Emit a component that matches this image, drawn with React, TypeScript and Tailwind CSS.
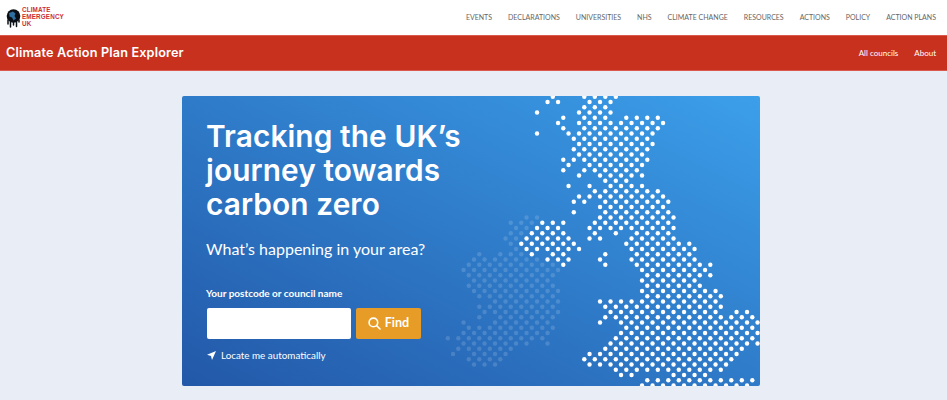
const uk: [number, number[][]][] = [
  [0, [[-6, -6], [0, 6]]], [1, [[-7, -7], [-5, -5], [1, 5]]], [2, [[0, 4]]], [3, [[-9, -9], [-1, 5]]],
  [4, [[-4, -4], [0, 4], [8, 14]]], [5, [[-5, -5], [-1, 5], [7, 15]]], [6, [[-4, -4], [0, 14]]],
  [7, [[-9, -9], [-3, -3], [-1, 13]]], [8, [[-2, -2], [0, 12]]], [9, [[-1, 13]]], [10, [[-2, -2], [0, 12]]],
  [11, [[-1, 11]]], [12, [[-4, -4], [-2, -2], [0, 12]]], [13, [[-3, -3], [1, 11]]], [14, [[-4, -4], [0, 10]]],
  [15, [[-1, -1], [3, 11]]], [16, [[4, 8]]], [17, [[-3, -3], [1, 1], [5, 11]]], [18, [[2, 14]]],
  [19, [[-1, 1], [3, 15]]], [20, [[-2, 0], [4, 16]]], [21, [[3, 15]]], [22, [[-2, -2], [4, 16]]],
  [23, [[3, 17]]], [24, [[-8, -4], [2, 16]]], [25, [[-9, -5], [1, 1], [3, 17]]], [26, [[-10, -4], [2, 2], [6, 6], [10, 16]]],
  [27, [[-11, -3], [1, 3], [9, 17]]], [28, [[-12, -2], [8, 20]]], [29, [[-11, -1], [9, 21]]],
  [30, [[-10, -10], [-6, -4], [4, 4], [10, 20]]], [31, [[-7, -3], [3, 3], [9, 21]]], [32, [[-4, -4], [4, 4], [10, 24]]],
  [33, [[11, 23]]], [34, [[12, 24]]], [35, [[11, 21]]], [36, [[12, 22]]], [37, [[11, 25]]], [38, [[12, 26]]],
  [39, [[3, 25]]], [40, [[4, 26]]], [41, [[5, 25], [29, 31]]], [42, [[4, 32]]], [43, [[3, 3], [7, 33]]],
  [44, [[8, 32]]], [45, [[7, 33]]], [46, [[6, 32]]], [47, [[5, 33]]], [48, [[4, 30]]], [49, [[1, 29]]],
  [50, [[0, 28]]], [51, [[1, 27]]], [52, [[6, 26]]], [53, [[7, 9], [17, 23]]], [54, [[12, 32]]], [55, [[11, 31]]],
];

const ireland: [number, number[][]][] = [
  [23, [[-11, -9]]], [24, [[-14, -10]]], [25, [[-13, -11]]], [26, [[-14, -12]]], [27, [[-15, -13]]], [28, [[-14, -14]]],
  [29, [[-13, -13]]], [30, [[-20, -20], [-16, -12]]], [31, [[-21, -9]]], [32, [[-22, -6]]], [33, [[-23, -5]]],
  [34, [[-22, -6]]], [35, [[-21, -7]]], [36, [[-22, -6]]], [37, [[-21, -5]]], [38, [[-20, -6]]], [39, [[-17, -5]]],
  [40, [[-20, -20], [-18, -6]]], [41, [[-19, -5]]], [42, [[-20, -20], [-16, -6]]], [43, [[-23, -23], [-17, -7]]],
  [44, [[-22, -6]]], [45, [[-23, -7]]], [46, [[-26, -24], [-22, -8]]], [47, [[-23, -11], [-7, -7]]],
  [48, [[-24, -14]]], [49, [[-25, -25], [-21, -15]]], [50, [[-22, -16]]], [51, [[-21, -17]]],
];

function Dots({ rows, opacity, r }: { rows: [number, number[][]][]; opacity: number; r: number }) {
  const out: React.ReactElement[] = [];
  rows.forEach(([row, spans]) => {
    spans.forEach(([a, b]) => {
      for (let c = a; c <= b; c += 2) {
        out.push(<circle key={`${row}-${c}`} cx={402.3 + 5.25 * c} cy={0.7 + 5.25 * row} r={r} fill="#fff" fillOpacity={opacity} />);
      }
    });
  });
  return <>{out}</>;
}

const nav = ["EVENTS", "DECLARATIONS", "UNIVERSITIES", "NHS", "CLIMATE CHANGE", "RESOURCES", "ACTIONS", "POLICY", "ACTION PLANS"];

function Logo() {
  return (
    <div className="flex items-center gap-[1px]">
      <svg width="15" height="19" viewBox="0 0 15 19" className="mt-[2px]">
        <circle cx="7.5" cy="7" r="6.8" fill="#0b0f14" />
        <path d="M3 4 L7 2.5 L9.5 4.5 L8.5 7 L10 9.5 L7.5 11.5 L6 8.5 L3.5 7.5 Z" fill="#2f6f9f" />
        <path d="M2 11 V15 M4.5 12 V18 M7.5 13 V16 M10.5 12 V17.5 M13 11 V13" stroke="#0b0f14" strokeWidth="1.5" strokeLinecap="round" />
      </svg>
      <div className="text-[#cc2f36] font-[Liberation_Sans,sans-serif] font-bold text-[6.3px] leading-[6.7px] tracking-[0.15px]">
        <div>CLIMATE</div>
        <div>EMERGENCY</div>
        <div>UK</div>
      </div>
    </div>
  );
}

export default function App() {
  return (
    <div className="min-h-[400px] h-[400px] overflow-hidden bg-[#e8edf6] font-[Lato,sans-serif]">
      <header className="h-[35px] bg-white flex items-center justify-between pl-[6px] pr-[11px]">
        <Logo />
        <nav className="flex gap-[16px] text-[7px] text-[#666666]">
          {nav.map((n) => (
            <span key={n}>{n}</span>
          ))}
        </nav>
      </header>
      <div className="h-[36px] bg-[#c9311f] border-y border-[#d9594c] flex items-center justify-between pl-[6px] pr-[11px]">
        <span className="font-[Inter,sans-serif] font-semibold text-white text-[12.7px] tracking-[0.15px]">Climate Action Plan Explorer</span>
        <div className="flex gap-[16px] text-[8px] text-white">
          <span>All councils</span>
          <span>About</span>
        </div>
      </div>
      <main className="flex pl-[182px] pt-[25px]">
        <section className="relative w-[578px] h-[290px] rounded-[2px] overflow-hidden bg-linear-to-tr from-[#2358a8] to-[#3c9fea] pl-[24px] pt-[23px] text-white">
          <svg className="absolute inset-0" width="578" height="290" viewBox="0 0 578 290">
            <Dots rows={ireland} opacity={0.15} r={2.2} />
            <Dots rows={uk} opacity={1} r={2.2} />
          </svg>
          <div className="relative">
            <h1 className="font-[Inter,sans-serif] font-semibold text-[29.8px] leading-[34px] tracking-[0.1px]">
              Tracking the UK’s
              <br />
              journey towards
              <br />
              carbon zero
            </h1>
            <p className="mt-[16px] text-[16px] leading-[24px]">What’s happening in your area?</p>
            <label className="block mt-[25px] font-bold text-[10px] leading-[14px]">Your postcode or council name</label>
            <div className="flex gap-[5px] mt-[8px] ml-[1px]">
              <input className="w-[144px] h-[31px] bg-white rounded-[2px] outline-none" />
              <button className="w-[65px] h-[31px] bg-[#e69c26] rounded-[2px] flex items-center justify-center gap-[4px] font-bold text-[12.6px]">
                <svg width="13" height="13" viewBox="0 0 13 13" fill="none" stroke="#fff" strokeWidth="1.6" strokeLinecap="round">
                  <circle cx="5.4" cy="5.4" r="4.3" />
                  <path d="M8.6 8.6 L12 12" />
                </svg>
                Find
              </button>
            </div>
            <div className="flex items-center gap-[5px] mt-[9px] ml-[1px] text-[9.85px] leading-[14px]">
              <svg width="9" height="9" viewBox="0 0 9 9">
                <path d="M9 0 L0 3.8 L4 4.9 L5 9 Z" fill="#fff" />
              </svg>
              <span>Locate me automatically</span>
            </div>
          </div>
        </section>
      </main>
    </div>
  );
}
